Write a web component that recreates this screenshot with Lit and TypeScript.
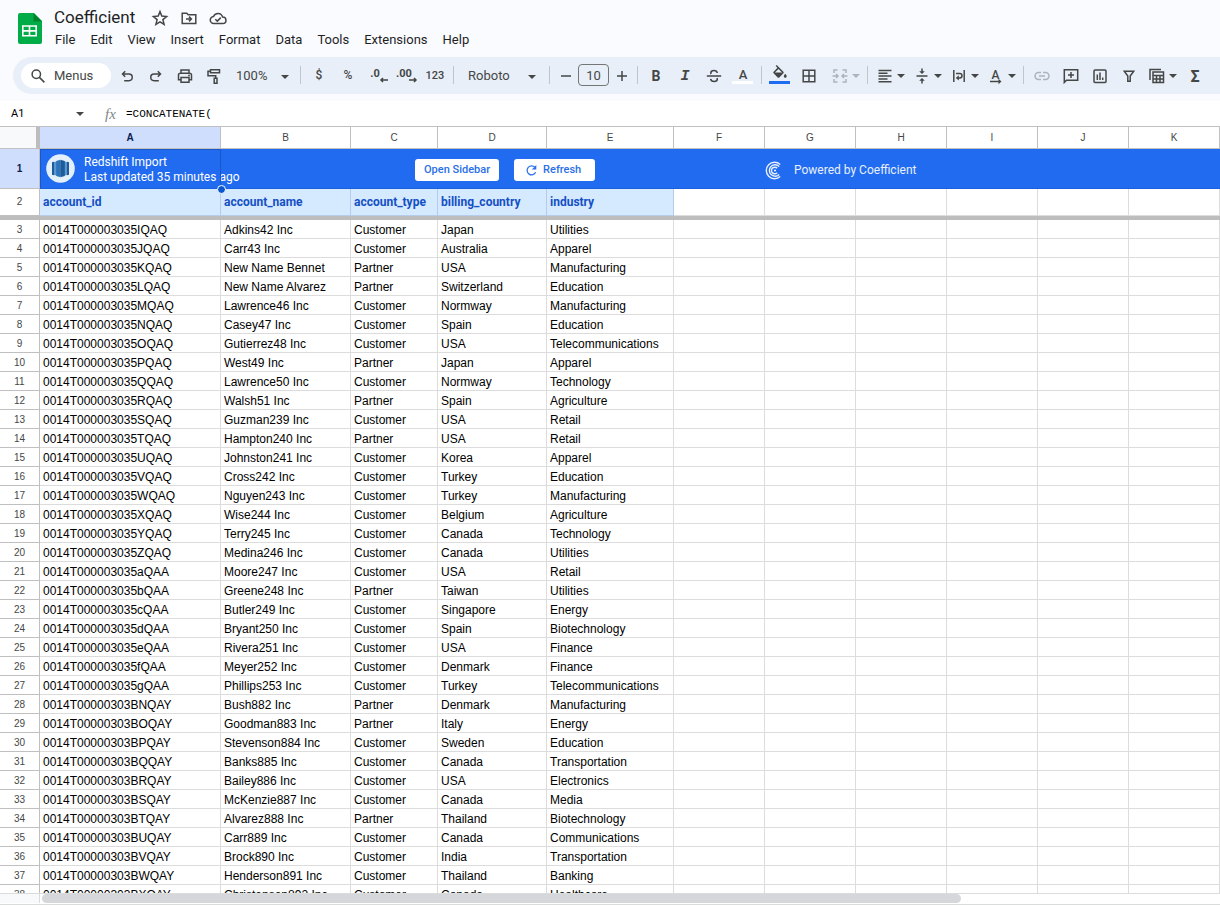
import { LitElement, html, css, svg, nothing } from "lit";
import { customElement, property } from "lit/decorators.js";
import { classMap } from "lit/directives/class-map.js";

// Icons are drawn on an 18 x 18 grid with 1.5 strokes.
const icons: Record<string, unknown> = {
  undo: svg`<path d="M7.2 4.2 4.5 7l2.7 2.8M4.6 7h6.3a3.3 3.3 0 0 1 0 6.7H6.2"/>`,
  redo: svg`<path d="M10.8 4.2 13.5 7l-2.7 2.8M13.4 7H7.1a3.3 3.3 0 0 0 0 6.7h4.7"/>`,
  print: svg`<path d="M5 6V3h8v3M4.7 12.7H2.5V8A1.8 1.8 0 0 1 4.3 6.2h9.4A1.8 1.8 0 0 1 15.5 8v4.7h-2.2M5 10.5h8v4.8H5z"/><circle class="solid" cx="13" cy="8.5" r=".9"/>`,
  paint: svg`<path d="M5.5 2.8h9v3h-9zM5.5 4.3H3v4.5h7.7v2.4M9.2 11.3h2.8v5H9.2z"/>`,
  borders: svg`<path d="M3.2 3.2h11.6v11.6H3.2zM9 3v12M3 9h12"/>`,
  merge: svg`<path d="M6.5 3H3v3M6.5 15H3v-3M11.5 3H15v3M11.5 15H15v-3M1.5 9h5M5 7l2 2-2 2M16.5 9h-5M13 7l-2 2 2 2"/>`,
  align: svg`<path d="M2.5 3.5h13M2.5 6.3h9M2.5 9.1h13M2.5 11.9h9M2.5 14.7h13"/>`,
  valign: svg`<path d="M3.5 9h11M9 1.5v4M9 16.5v-4"/><path class="solid" d="M6.2 4.2h5.6L9 7zM6.2 13.8h5.6L9 11z"/>`,
  wrap: svg`<path d="M3.8 3v12M14.2 3v12M6 6.5h3.8a2.2 2.2 0 0 1 0 4.4H7.5"/><path class="solid" d="M8.8 8.2v5.4L5.8 10.9z"/>`,
  rotate: svg`<path d="M3 14.5h10"/><path class="solid" d="M11.5 11.8v5.4l3-2.7z"/>`,
  strike: svg`<path d="M1.8 9h14.4M12.3 6C12 4.2 10.6 3.5 9 3.5c-1.7 0-3.2.8-3.2 2.4 0 .4.1.8.3 1.2M5.6 11.8c.3 1.8 1.7 2.7 3.5 2.7s3.2-.9 3.2-2.5c0-.4-.1-.8-.2-1.1"/>`,
  link: svg`<path d="M8 5.5H5.5a3.5 3.5 0 0 0 0 7H8M10 5.5h2.5a3.5 3.5 0 0 1 0 7H10M6 9h6"/>`,
  comment: svg`<path d="M2.3 2.8h13.4v10.4H4.5l-2.2 2.2zM9 5v6M6 8h6"/>`,
  chart: svg`<rect x="3" y="3" width="12" height="12.5" rx="1"/><path d="M6.3 7.5v5.5M9 5.5v7.5M11.7 10.5v2.5"/>`,
  filter: svg`<path d="M4.3 4.3h9.4L10.2 9v5.3H7.8V9z"/>`,
  tableView: svg`<path d="M5 5h10.5v10.5H5zM5 8.5h10.5M5 12h10.5M8.5 8.5v7M12 8.5v7M2 13V2.5h11"/>`,
  minus: svg`<path d="M4 9h10"/>`,
  plus: svg`<path d="M4 9h10M9 4v10"/>`,
  search: svg`<circle cx="7.3" cy="7.3" r="4.2"/><path d="m10.4 10.4 5 5"/>`,
  star: svg`<path d="m9 2.6 1.8 4.5 4.8.4-3.7 3.1 1.2 4.7L9 12.8l-4.1 2.5 1.2-4.7-3.7-3.1 4.8-.4z"/>`,
  folder: svg`<path d="M2.2 4.2h4.5l1.5 1.6h7.6v8.7H2.2zM6 10h5M9 7.6l2.4 2.4L9 12.4"/>`,
  cloud: svg`<path d="M5 14.5a3.5 3.5 0 0 1-.5-7A4.8 4.8 0 0 1 13.6 8a3.2 3.2 0 0 1 .2 6.5zM6.3 10.2l2 1.9 3.5-3.5"/>`,
  refresh: svg`<path d="M14 11.2A5.4 5.4 0 1 1 13.2 5.3"/><path class="solid" d="M14.8 2.3v5.4H9.4z"/>`,
  left: svg`<path d="M9 3H2M4 1 2 3l2 2"/>`,
  right: svg`<path d="M1 3h7M6 1l2 2-2 2"/>`,
};

@customElement("ui-icon")
class UiIcon extends LitElement {
  @property() name = "";
  @property() box = "0 0 18 18";
  static styles = css`
    :host { display: block; width: 18px; height: 18px; flex: none; }
    svg { display: block; width: 100%; height: 100%; fill: none; stroke: currentColor; stroke-width: 1.5; }
    .solid { fill: currentColor; stroke: none; }
  `;
  render() {
    return html`<svg viewBox=${this.box} aria-hidden="true">${icons[this.name]}</svg>`;
  }
}

@customElement("ui-caret")
class UiCaret extends LitElement {
  static styles = css`
    :host { display: block; width: 8px; height: 4px; flex: none; pointer-events: none; }
    svg { display: block; fill: currentColor; }
  `;
  render() {
    return html`<svg width="8" height="4" viewBox="0 0 8 4" aria-hidden="true"><path d="M0 0h8L4 4z"/></svg>`;
  }
}

const menus = ["File", "Edit", "View", "Insert", "Format", "Data", "Tools", "Extensions", "Help"];
const letters = "ABCDEFGHIJK".split("");
const fields = ["account_id", "account_name", "account_type", "billing_country", "industry"];

// id suffix | name | C(ustomer) or P(artner) | country | industry
const accounts = `3035IQAQ|Adkins42|C|Japan|Utilities
3035JQAQ|Carr43|C|Australia|Apparel
3035KQAQ|New Name Bennet|P|USA|Manufacturing
3035LQAQ|New Name Alvarez|P|Switzerland|Education
3035MQAQ|Lawrence46|C|Normway|Manufacturing
3035NQAQ|Casey47|C|Spain|Education
3035OQAQ|Gutierrez48|C|USA|Telecommunications
3035PQAQ|West49|P|Japan|Apparel
3035QQAQ|Lawrence50|C|Normway|Technology
3035RQAQ|Walsh51|P|Spain|Agriculture
3035SQAQ|Guzman239|C|USA|Retail
3035TQAQ|Hampton240|P|USA|Retail
3035UQAQ|Johnston241|C|Korea|Apparel
3035VQAQ|Cross242|C|Turkey|Education
3035WQAQ|Nguyen243|C|Turkey|Manufacturing
3035XQAQ|Wise244|C|Belgium|Agriculture
3035YQAQ|Terry245|C|Canada|Technology
3035ZQAQ|Medina246|C|Canada|Utilities
3035aQAA|Moore247|C|USA|Retail
3035bQAA|Greene248|P|Taiwan|Utilities
3035cQAA|Butler249|C|Singapore|Energy
3035dQAA|Bryant250|C|Spain|Biotechnology
3035eQAA|Rivera251|C|USA|Finance
3035fQAA|Meyer252|C|Denmark|Finance
3035gQAA|Phillips253|C|Turkey|Telecommunications
303BNQAY|Bush882|P|Denmark|Manufacturing
303BOQAY|Goodman883|P|Italy|Energy
303BPQAY|Stevenson884|C|Sweden|Education
303BQQAY|Banks885|C|Canada|Transportation
303BRQAY|Bailey886|C|USA|Electronics
303BSQAY|McKenzie887|C|Canada|Media
303BTQAY|Alvarez888|P|Thailand|Biotechnology
303BUQAY|Carr889|C|Canada|Communications
303BVQAY|Brock890|C|India|Transportation
303BWQAY|Henderson891|C|Thailand|Banking
303BXQAY|Christensen892|C|Canada|Healthcare`
  .split("\n")
  .map((line) => {
    const [id, name, type, country, industry] = line.split("|");
    return [
      `0014T00000${id}`,
      /\d$/.test(name) ? `${name} Inc` : name,
      type === "C" ? "Customer" : "Partner",
      country,
      industry,
    ];
  });

@customElement("sheet-header")
class SheetHeader extends LitElement {
  static styles = css`
    :host { display: flex; gap: 12px; padding: 6px 0 0 18px; height: 51px; box-sizing: border-box; color: #1f1f1f; font-family: Roboto, sans-serif; }
    .logo { display: block; width: 24px; height: 32px; margin-top: 6px; flex: none; }
    .title { display: flex; align-items: center; height: 24px; color: #444746; }
    h1 { margin: 0 16px 0 0; font-size: 17px; font-weight: 400; line-height: 22px; padding-bottom: 2px; color: #1f1f1f; }
    .title button { padding: 0; margin-right: 11px; border: 0; background: none; color: inherit; }
    nav { display: flex; gap: 15px; padding-left: 1px; }
    nav button { padding: 0; border: 0; background: none; color: inherit; font: 13px/20px Roboto, sans-serif; }
  `;
  render() {
    return html`
      <svg class="logo" viewBox="0 0 24 32" aria-hidden="true">
        <path fill="#00ac47" d="M2 1h14l8 8v21a2 2 0 0 1-2 2H2a2 2 0 0 1-2-2V3a2 2 0 0 1 2-2z" />
        <path fill="#00832d" d="M15.5 1 24 9.5h-8.5z" />
        <path fill="none" stroke="#fff" stroke-width="1.6" d="M4.8 14h13.4v9.8H4.8zM4.8 18.9h13.4M11.5 14v9.8" />
      </svg>
      <div>
        <div class="title">
          <h1>Coefficient</h1>
          <button aria-label="Star"><ui-icon name="star"></ui-icon></button>
          <button aria-label="Move"><ui-icon name="folder"></ui-icon></button>
          <button aria-label="Document status"><ui-icon name="cloud"></ui-icon></button>
        </div>
        <nav>${menus.map((m) => html`<button>${m}</button>`)}</nav>
      </div>
    `;
  }
}

@customElement("sheet-toolbar")
class SheetToolbar extends LitElement {
  static styles = css`
    :host { display: block; padding: 6px 0 7px 13px; font-family: Roboto, sans-serif; color: #444746; }
    .bar { display: flex; gap: 1px; height: 37px; box-sizing: border-box; padding: 5px 0 4px 8px; background: #e9eff9; border-radius: 19px 0 0 19px; overflow: hidden; }
    button, select, input { font: inherit; color: inherit; border: 0; margin: 0; background: none; }
    button { position: relative; flex: none; display: flex; align-items: center; justify-content: center; width: 28px; height: 28px; padding: 0; }
    .find { display: flex; align-items: center; gap: 7px; box-sizing: border-box; width: 90px; height: 25px; padding-left: 8px; margin: 1px 1px 0 0; border-radius: 13px; background: #fff; flex: none; }
    .find input { width: 48px; padding: 0; font-size: 13px; outline: 0; }
    .find input::placeholder { color: #444746; opacity: 1; }
    .drop { position: relative; flex: none; display: flex; height: 28px; }
    .drop select { appearance: none; width: 100%; padding: 0 0 2px 7px; font-size: 13px; outline: 0; }
    .drop ui-caret { position: absolute; right: 7px; top: 13px; }
    .zoom { width: 67px; }
    .family { width: 87px; }
    .drop.family select { padding-left: 10px; }
    .drop.family ui-caret { right: 9px; }
    .rule { flex: none; width: 1px; height: 18px; margin: 4px 3px 0; background: #c0c4cb; }
    .split { width: 36px; gap: 3px; }
    .off { color: #aeb3ba; }
    .split.off { margin-left: 3px; }
    .sym { font-size: 12px; font-weight: 500; padding-bottom: 2px; }
    .num { font-size: 11px; font-weight: 500; padding-bottom: 1px; }
    .dec { font-size: 11px; font-weight: 700; padding: 0 4px 6px 0; }
    .dec ui-icon { position: absolute; width: 10px; height: 6px; right: 2px; bottom: 7px; }
    .size { flex: none; width: 31px; height: 22px; box-sizing: border-box; margin: 2px 0 0; padding: 0; border: 1px solid #747775; border-radius: 4px; text-align: center; font-size: 13px; }
    .step { width: 23px; }
    .bold { font-size: 14px; font-weight: 700; }
    .italic { font: italic 700 15px "Liberation Mono", monospace; }
    .ink { font-size: 13px; font-weight: 500; padding-bottom: 4px; }
    .fill { padding-bottom: 4px; }
    .ink::after, .fill::after { content: ""; position: absolute; left: 3px; right: 4px; bottom: 6px; height: 3px; background: #fff; }
    .fill::after { background: #1f6bf2; }
    .fill svg { fill: currentColor; }
    .turn { position: relative; width: 18px; font-size: 12px; font-weight: 500; line-height: 18px; height: 20px; }
    .turn ui-icon { position: absolute; left: 0; top: 1px; }
    .sigma { font-size: 16px; font-weight: 700; }
  `;
  btn(name: string, label: string, off = false) {
    return html`<button class=${classMap({ off })} aria-label=${label}><ui-icon name=${name}></ui-icon></button>`;
  }
  split(name: string, label: string, off = false) {
    return html`<button class=${classMap({ split: true, off })} aria-label=${label}><ui-icon name=${name}></ui-icon><ui-caret></ui-caret></button>`;
  }
  render() {
    const rule = html`<span class="rule"></span>`;
    return html`<div class="bar" role="toolbar" aria-label="Main">
      <label class="find"><ui-icon name="search"></ui-icon><input type="text" placeholder="Menus" aria-label="Menus" /></label>
      ${this.btn("undo", "Undo")} ${this.btn("redo", "Redo")} ${this.btn("print", "Print")} ${this.btn("paint", "Paint format")}
      <label class="drop zoom"><select aria-label="Zoom"><option>100%</option></select><ui-caret></ui-caret></label>
      ${rule}
      <button class="sym">$</button>
      <button class="sym">%</button>
      <button class="dec" aria-label="Decrease decimal places">.0<ui-icon name="left" box="0 0 10 6"></ui-icon></button>
      <button class="dec" aria-label="Increase decimal places">.00<ui-icon name="right" box="0 0 10 6"></ui-icon></button>
      <button class="num">123</button>
      ${rule}
      <label class="drop family"><select aria-label="Font"><option>Roboto</option></select><ui-caret></ui-caret></label>
      ${rule}
      <button class="step" aria-label="Decrease font size"><ui-icon name="minus"></ui-icon></button>
      <input class="size" type="text" value="10" aria-label="Font size" />
      <button class="step" aria-label="Increase font size"><ui-icon name="plus"></ui-icon></button>
      ${rule}
      <button class="bold">B</button>
      <button class="italic">I</button>
      ${this.btn("strike", "Strikethrough")}
      <button class="ink">A</button>
      ${rule}
      <button class="fill" aria-label="Fill color">
        <svg width="18" height="18" viewBox="0 0 24 24" aria-hidden="true"><path d="M16.56 8.94 7.62 0 6.21 1.41l2.38 2.38-5.15 5.15a1.49 1.49 0 0 0 0 2.12l5.5 5.5c.29.29.68.44 1.06.44s.77-.15 1.06-.44l5.5-5.5c.59-.58.59-1.53 0-2.12zM5.21 10 10 5.21 14.79 10H5.21zM19 11.5s-2 2.17-2 3.5c0 1.1.9 2 2 2s2-.9 2-2c0-1.33-2-3.5-2-3.5z" /></svg>
      </button>
      ${this.btn("borders", "Borders")} ${this.split("merge", "Merge cells", true)} ${rule}
      ${this.split("align", "Horizontal align")} ${this.split("valign", "Vertical align")} ${this.split("wrap", "Text wrapping")}
      <button class="split" aria-label="Text rotation"><span class="turn">A<ui-icon name="rotate"></ui-icon></span><ui-caret></ui-caret></button>
      ${rule}
      ${this.btn("link", "Insert link", true)} ${this.btn("comment", "Insert comment")} ${this.btn("chart", "Insert chart")} ${this.btn("filter", "Create a filter")}
      ${this.split("tableView", "Filter views")}
      <button class="sigma">Σ</button>
    </div>`;
  }
}

@customElement("import-banner")
class ImportBanner extends LitElement {
  static styles = css`
    :host { display: grid; grid-template-columns: 375px 350px auto; align-items: center; height: 39px; color: #fff; font: 12px/15px Roboto, sans-serif; }
    .source { display: flex; align-items: center; gap: 9px; padding-left: 6px; white-space: nowrap; }
    .source svg { flex: none; }
    .source p { margin: 0; padding-top: 2px; }
    .actions { display: flex; gap: 15px; padding-top: 3px; }
    button { display: flex; align-items: center; gap: 4px; height: 22px; padding: 0 9px; border: 0; border-radius: 3px; background: #fff; color: #2a6fe8; font: 500 11px/22px Roboto, sans-serif; white-space: nowrap; }
    .refresh { padding: 0 14px 0 10px; }
    .refresh ui-icon { width: 15px; height: 15px; }
    .brand { display: flex; align-items: center; gap: 12px; padding-top: 3px; color: #e8f0fe; white-space: nowrap; }
  `;
  render() {
    return html`
      <div class="source">
        <svg width="29" height="29" viewBox="0 0 29 29" aria-hidden="true">
          <circle cx="14.5" cy="14.5" r="14.3" fill="#e3f0fc" />
          <path fill="#5a96d2" d="M6 8.3 14.5 7 23 8.3v12.4L14.5 22 6 20.7z" />
          <path fill="#205b99" d="M6 8.300l2-.6v13.600l-2-.6zM14.500 5.800l4.300 1.200v15l-4.300 1.200zM21 7.700l2 .6v12.400l-2 .6z" />
          <path fill="#2e73b8" d="M14.500 5.800v17.400l-4.300-1.200V7z" />
        </svg>
        <p>Redshift Import<br />Last updated 35 minutes ago</p>
      </div>
      <div class="actions">
        <button>Open Sidebar</button>
        <button class="refresh"><ui-icon name="refresh"></ui-icon>Refresh</button>
      </div>
      <div class="brand">
        <svg width="17" height="19" viewBox="0 0 17 19" fill="none" stroke="#e8f0fe" stroke-width="1.4" aria-hidden="true">
          <path d="M15.2 3.6A8.2 8.2 0 1 0 15.2 15.4M14.2 5.6A5.7 5.7 0 1 0 14.2 13.4M12.2 7.3A3.3 3.3 0 1 0 12.2 11.7" />
          <circle cx="10" cy="9.5" r="1.1" fill="#e8f0fe" stroke="none" />
        </svg>
        <span>Powered by Coefficient</span>
      </div>
    `;
  }
}

@customElement("sheet-grid")
class SheetGrid extends LitElement {
  static styles = css`
    :host { display: block; overflow: hidden; border-top: 1px solid #c0c0c0; border-bottom: 1px solid #dadcdc; }
    table { width: 100%; min-width: 1220px; table-layout: fixed; border-collapse: separate; border-spacing: 0; font: 12px/16px "Liberation Sans", Arial, sans-serif; color: #000; }
    th, td { box-sizing: border-box; padding: 2px 0 0 3px; height: 19px; overflow: hidden; white-space: nowrap; text-align: left; border: solid #dcdcdc; border-width: 0 1px 1px 0; }
    thead th, tbody th { padding: 2px 0 0; text-align: center; font-size: 10px; font-weight: 400; color: #444746; border-color: #c0c0c0; }
    thead th { height: 22px; padding: 0; line-height: 21px; }
    thead .corner { background: #f8f9fa; border-right: 4px solid #bdbdbd; }
    thead .on, tbody .on { background: #cfdefc; color: #0b1f4f; font-weight: 700; }
    tbody .on { padding-top: 0; }
    .wr { width: 40px; }
    .wa { width: 181px; }
    .wb { width: 130px; }
    .wc { width: 87px; }
    .wd { width: 109px; }
    .we { width: 127px; }
    .banner { position: relative; height: 40px; padding: 0; overflow: visible; background: #216bf0; border-color: #1a5fdb; border-right: 0; }
    .cursor { position: absolute; left: 0; top: 0; width: 180px; height: 39px; border-right: 1px solid #1a57c9; box-shadow: inset 1px 1px #1a57c9; pointer-events: none; }
    .knob { position: absolute; right: -6px; bottom: -6px; width: 7px; height: 7px; border: 1px solid #fff; border-radius: 50%; background: #0b57d0; }
    .names th, .names td { height: 27px; padding-top: 0; }
    .names .field { background: #d5e9ff; border-color: #b5cdea; color: #1450c4; font: 700 12px/26px Roboto, sans-serif; }
    .freeze td { height: 4px; padding: 0; border: 0; background: #bdbdbd; }
  `;
  render() {
    return html`<table>
      <colgroup>
        ${["wr", "wa", "wb", "wc", "wd", "we"].map((c) => html`<col class=${c} />`)}
        <col span="6" />
      </colgroup>
      <thead>
        <tr><th class="corner"></th>${letters.map((l) => html`<th scope="col" class=${l === "A" ? "on" : ""}>${l}</th>`)}</tr>
      </thead>
      <tbody>
        <tr>
          <th scope="row" class="on">1</th>
          <td class="banner" colspan="11"><import-banner></import-banner><div class="cursor"><span class="knob"></span></div></td>
        </tr>
        <tr class="names">
          <th scope="row">2</th>
          ${letters.map((_, i) => html`<td class=${fields[i] ? "field" : ""}>${fields[i] ?? nothing}</td>`)}
        </tr>
        <tr class="freeze"><td colspan="12"></td></tr>
        ${accounts.map((a, r) => html`<tr><th scope="row">${r + 3}</th>${letters.map((_, i) => html`<td>${a[i] ?? nothing}</td>`)}</tr>`)}
      </tbody>
    </table>`;
  }
}

@customElement("app-root")
class AppRoot extends LitElement {
  static styles = css`
    :host { display: flex; flex-direction: column; height: 100vh; background: #fff; font-family: Roboto, sans-serif; overflow: hidden; }
    .top { flex: none; background: #f9fbff; }
    .formula { flex: none; display: flex; align-items: center; height: 25px; color: #444746; }
    .formula input { border: 0; padding: 0; outline: 0; background: none; color: #000; }
    .name { width: 65px; margin-left: 11px; font: 11px/20px Roboto, sans-serif; }
    .fx { margin: 0 8px 0 21px; width: 13px; font: italic 15px/20px "Liberation Serif", serif; color: #80868b; }
    .expr { flex: 1; font: 11px/20px "Liberation Mono", monospace; }
    sheet-grid { flex: 1; min-height: 0; }
    .scroll { flex: none; display: flex; height: 10px; border-bottom: 1px solid #dadcdc; }
    .stub { width: 39px; height: 9px; margin-right: 2px; background: #f8f9fa; border-right: 1px solid #dadcdc; }
    .thumb { width: 78%; height: 9px; border-radius: 5px; background: #d5d7da; }
    .rail { flex: 1; }
  `;
  render() {
    return html`
      <div class="top"><sheet-header></sheet-header><sheet-toolbar></sheet-toolbar></div>
      <div class="formula">
        <input class="name" type="text" value="A1" aria-label="Name box" />
        <ui-caret></ui-caret>
        <span class="fx">fx</span>
        <input class="expr" type="text" value="=CONCATENATE(" aria-label="Formula" />
      </div>
      <sheet-grid></sheet-grid>
      <div class="scroll"><div class="stub"></div><div class="rail"><div class="thumb"></div></div></div>
    `;
  }
}
